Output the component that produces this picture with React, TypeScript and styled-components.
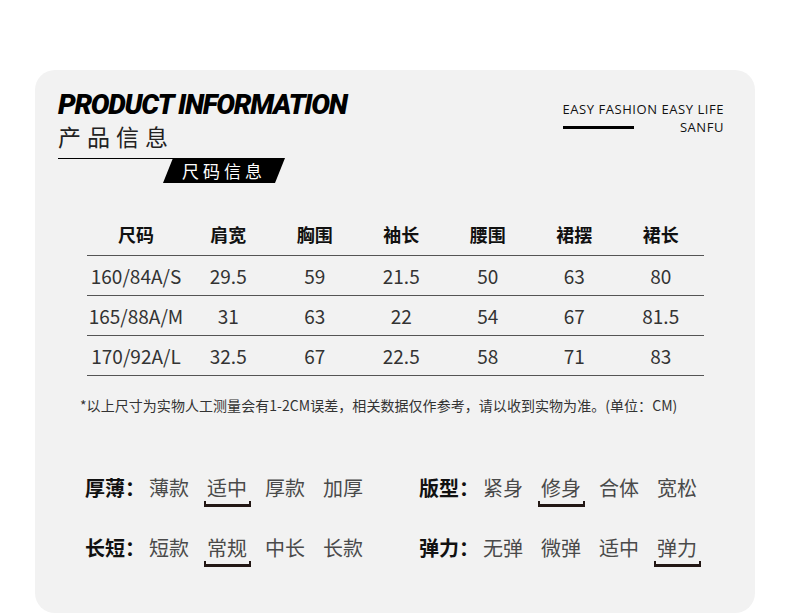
import React from "react";
import styled, { createGlobalStyle } from "styled-components";

const GlobalStyle = createGlobalStyle`
  html, body { margin: 0; padding: 0; background: #ffffff; }
  body { font-family: "Noto Sans CJK SC", "Noto Sans", sans-serif; }
`;

const Page = styled.div`
  width: 790px;
  height: 615px;
  box-sizing: border-box;
  padding: 70px 0 0 35px;
  overflow: hidden;
`;

const Card = styled.section`
  width: 720px;
  height: 543px;
  box-sizing: border-box;
  background: #f2f2f2;
  border-radius: 20px;
  padding: 21px 31px 0 23px;
`;

const Header = styled.header`
  display: flex;
  justify-content: space-between;
  align-items: flex-start;
`;

const Brand = styled.div`
  display: flex;
  flex-direction: column;
  align-items: flex-start;
`;

const Title = styled.h1`
  margin: 0;
  font-family: Roboto, "Liberation Sans", sans-serif;
  font-weight: 900;
  font-style: italic;
  font-size: 28px;
  line-height: 28px;
  letter-spacing: -1.3px;
  color: #000;
`;

const Subtitle = styled.div`
  margin-top: 6px;
  font-size: 23px;
  line-height: 23px;
  letter-spacing: 6px;
  color: #222;
`;

const Divider = styled.div`
  margin-top: 10px;
  display: flex;
  align-items: flex-start;
`;

const Rule = styled.div`
  width: 115px;
  height: 1px;
  background: #000;
`;

const Tag = styled.div`
  margin-left: -10px;
  width: 122px;
  height: 25px;
  box-sizing: border-box;
  padding-left: 19px;
  background: #000;
  clip-path: polygon(10px 0, 100% 0, calc(100% - 10px) 100%, 0 100%);
  color: #fff;
  font-size: 17px;
  line-height: 25px;
  letter-spacing: 4px;
`;

const Slogan = styled.div`
  margin-top: 12px;
  display: flex;
  flex-direction: column;
  font-family: "Open Sans", "Noto Sans", sans-serif;
  font-size: 13px;
  line-height: 13px;
  letter-spacing: 0.55px;
  color: #111;
`;

const SloganFoot = styled.div`
  margin-top: 5px;
  display: flex;
  justify-content: space-between;
  align-items: center;
`;

const Bar = styled.div`
  width: 71px;
  height: 3px;
  background: #000;
`;

const Table = styled.div`
  margin: 30px 0 0 29px;
  width: 617px;
`;

const Row = styled.div<{ $head?: boolean }>`
  display: grid;
  grid-template-columns: 98px repeat(6, 1fr);
  align-items: center;
  height: ${(p) => (p.$head ? 43 : 40)}px;
  box-sizing: border-box;
  border-bottom: 1px solid #555;
`;

const Cell = styled.div<{ $head?: boolean }>`
  text-align: center;
  font-size: ${(p) => (p.$head ? 18 : 19)}px;
  font-weight: ${(p) => (p.$head ? 700 : 400)};
  color: ${(p) => (p.$head ? "#111" : "#333")};
  line-height: 20px;
`;

const Note = styled.p`
  margin: 19px 0 0 22px;
  font-size: 14px;
  line-height: 20px;
  letter-spacing: 0.05px;
  color: #333;
`;

const Attrs = styled.div`
  margin: 63px 0 0 27px;
  display: grid;
  grid-template-columns: 334px auto;
  grid-auto-rows: 60px;
`;

const AttrRow = styled.div`
  display: flex;
  align-items: flex-start;
`;

const Label = styled.div`
  width: 64px;
  font-size: 20px;
  line-height: 20px;
  font-weight: 700;
  color: #111;
`;

const Options = styled.div`
  display: flex;
  gap: 18px;
`;

const Option = styled.div`
  width: 40px;
  display: flex;
  flex-direction: column;
  align-items: center;
`;

const OptionText = styled.span`
  font-size: 20px;
  line-height: 20px;
  color: #4a4a4a;
  white-space: nowrap;
`;

const Bracket = styled.span<{ $on: boolean }>`
  margin-top: 3px;
  width: 47px;
  height: 6px;
  flex: none;
  box-sizing: border-box;
  border: 2px solid #231815;
  border-top: none;
  border-bottom-width: 3px;
  visibility: ${(p) => (p.$on ? "visible" : "hidden")};
`;

const heads = ["尺码", "肩宽", "胸围", "袖长", "腰围", "裙摆", "裙长"];
const rows = [
  ["160/84A/S", "29.5", "59", "21.5", "50", "63", "80"],
  ["165/88A/M", "31", "63", "22", "54", "67", "81.5"],
  ["170/92A/L", "32.5", "67", "22.5", "58", "71", "83"],
];

const attrs: { label: string; options: string[]; active: number }[] = [
  { label: "厚薄：", options: ["薄款", "适中", "厚款", "加厚"], active: 1 },
  { label: "版型：", options: ["紧身", "修身", "合体", "宽松"], active: 1 },
  { label: "长短：", options: ["短款", "常规", "中长", "长款"], active: 1 },
  { label: "弹力：", options: ["无弹", "微弹", "适中", "弹力"], active: 3 },
];

export default function App() {
  return (
    <>
      <GlobalStyle />
      <Page>
        <Card>
          <Header>
            <Brand>
              <Title>PRODUCT INFORMATION</Title>
              <Subtitle>产品信息</Subtitle>
              <Divider>
                <Rule />
                <Tag>尺码信息</Tag>
              </Divider>
            </Brand>
            <Slogan>
              <span>EASY FASHION EASY LIFE</span>
              <SloganFoot>
                <Bar />
                <span>SANFU</span>
              </SloganFoot>
            </Slogan>
          </Header>

          <Table>
            <Row $head>
              {heads.map((h) => (
                <Cell $head key={h}>
                  {h}
                </Cell>
              ))}
            </Row>
            {rows.map((r) => (
              <Row key={r[0]}>
                {r.map((c, i) => (
                  <Cell key={i}>{c}</Cell>
                ))}
              </Row>
            ))}
          </Table>

          <Note>
            *以上尺寸为实物人工测量会有1-2CM误差，相关数据仅作参考，请以收到实物为准。(单位：CM)
          </Note>

          <Attrs>
            {attrs.map((a) => (
              <AttrRow key={a.label}>
                <Label>{a.label}</Label>
                <Options>
                  {a.options.map((o, i) => (
                    <Option key={o}>
                      <OptionText>{o}</OptionText>
                      <Bracket $on={i === a.active} />
                    </Option>
                  ))}
                </Options>
              </AttrRow>
            ))}
          </Attrs>
        </Card>
      </Page>
    </>
  );
}
